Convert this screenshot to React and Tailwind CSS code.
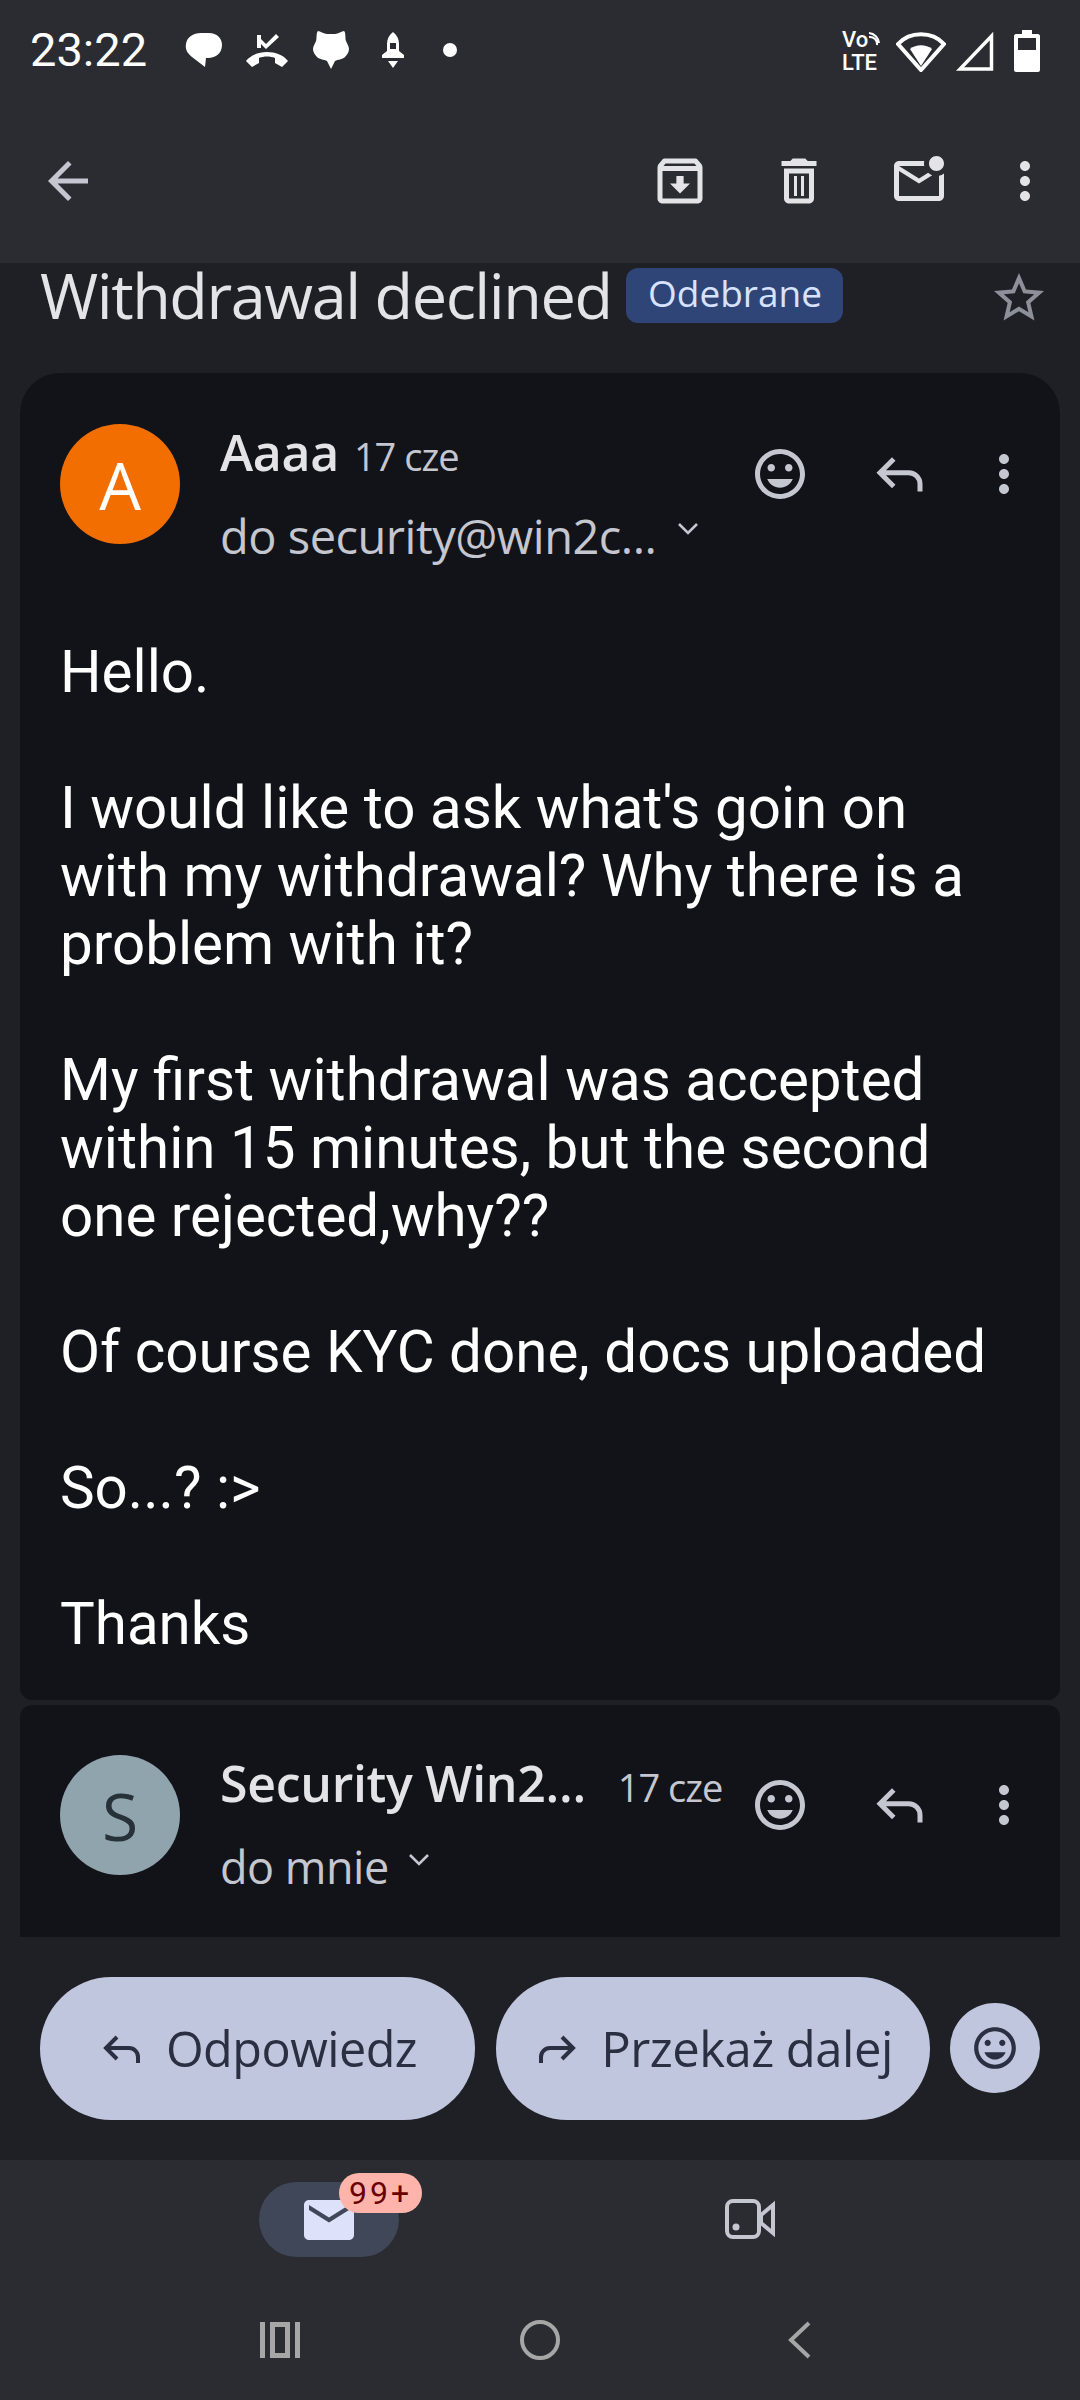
import React from "react";

const headingFont = "font-['Open_Sans','Noto_Sans',sans-serif]";
const bodyFont = "font-['Roboto','Liberation_Sans',sans-serif]";

const Icon = ({ d, size = 60, className = "" }) => (
  <svg viewBox="0 0 24 24" width={size} height={size} fill="currentColor" className={`shrink-0 ${className}`}>
    <path d={d} />
  </svg>
);

const paths = {
  back: "M20 11H7.83l5.59-5.59L12 4l-8 8 8 8 1.41-1.41L7.83 13H20v-2z",
  archive:
    "M20.54 5.23l-1.39-1.68C18.88 3.21 18.47 3 18 3H6c-.47 0-.88.21-1.16.55L3.46 5.23C3.17 5.57 3 6.02 3 6.5V19c0 1.1.9 2 2 2h14c1.1 0 2-.9 2-2V6.5c0-.48-.17-.93-.46-1.27zM6.24 5h11.52l.83 1H5.42l.82-1zM5 19V8h14v11H5zm8.45-9h-2.9v3H8l4 4 4-4h-2.55z",
  trash:
    "M16 9v10H8V9h8m-1.5-6h-5l-1 1H5v2h14V4h-3.5l-1-1zM18 7H6v12c0 1.1.9 2 2 2h8c1.1 0 2-.9 2-2V7zM10 10h1.2v8H10zM12.8 10H14v8h-1.2z",
  unread:
    "M22 8.98V18c0 1.1-.9 2-2 2H4c-1.1 0-2-.9-2-2V6c0-1.1.9-2 2-2h10.1c-.06.32-.1.66-.1 1s.04.68.1 1H4l8 5 3.67-2.29c.47.43 1.02.76 1.63.98L12 13 4 8v10h16V9.9c.74-.15 1.42-.48 2-.92zM16 5c0 1.66 1.34 3 3 3s3-1.34 3-3-1.34-3-3-3-3 1.34-3 3z",
  more: "M12 8c1.1 0 2-.9 2-2s-.9-2-2-2-2 .9-2 2 .9 2 2 2zm0 2c-1.1 0-2 .9-2 2s.9 2 2 2 2-.9 2-2-.9-2-2-2zm0 6c-1.1 0-2 .9-2 2s.9 2 2 2 2-.9 2-2-.9-2-2-2z",
  star: "M22 9.24l-7.19-.62L12 2 9.19 8.63 2 9.24l5.46 4.73L5.82 21 12 17.27 18.18 21l-1.63-7.03L22 9.24zM12 15.4l-3.76 2.27 1-4.28-3.32-2.88 4.38-.38L12 6.1l1.71 4.04 4.38.38-3.32 2.88 1 4.28L12 15.4z",
  smile:
    "M11.99 2C6.47 2 2 6.48 2 12s4.47 10 9.99 10C17.52 22 22 17.52 22 12S17.52 2 11.99 2zM12 20c-4.42 0-8-3.58-8-8s3.58-8 8-8 8 3.58 8 8-3.58 8-8 8zm3.5-9c.83 0 1.5-.67 1.5-1.5S16.33 8 15.5 8 14 8.67 14 9.5s.67 1.5 1.5 1.5zm-7 0c.83 0 1.5-.67 1.5-1.5S9.33 8 8.5 8 7 8.67 7 9.5 7.67 11 8.5 11zm3.5 6.5c2.33 0 4.31-1.46 5.11-3.5H6.89c.8 2.04 2.78 3.5 5.11 3.5z",
  mail: "M20 4H4c-1.1 0-2 .9-2 2v12c0 1.1.9 2 2 2h16c1.1 0 2-.9 2-2V6c0-1.1-.9-2-2-2zm0 4l-8 5-8-5V6l8 5 8-5v2z",
};

const ReplyIcon = ({ size = 60, flip = false }) => (
  <svg viewBox="0 0 24 24" width={size} height={size} fill="none" stroke="currentColor" strokeWidth="2" className={`shrink-0 ${flip ? "-scale-x-100" : ""}`}>
    <path d="M9.5 6 L4 11.5 L9.5 17 M4 11.5 H15.5 a4.5 4.5 0 0 1 4.5 4.5 V19" />
  </svg>
);

const Chevron = () => (
  <svg viewBox="0 0 20 12" width="20" height="12" fill="none" stroke="#c4c6d0" strokeWidth="2.6">
    <path d="M1 1 L10 10 L19 1" />
  </svg>
);

const StatusLeft = () => (
  <div className="flex items-center ml-[38px] gap-[22px] text-white">
    <svg viewBox="0 0 38 36" width="38" height="36" fill="white">
      <path d="M16 1h8c8 0 13 5 13 12 0 8-6 13-14 13h-2l-1 9L7 25C2 21 0 17 1 12 2 5 8 1 16 1z" />
    </svg>
    <svg viewBox="0 0 44 36" width="44" height="36" fill="white" className="mr-[2px]">
      <path d="M12 3h4v4l5 5L31 2l3 3-13 12-5-5v4h-4zM1 29c9-12 33-12 42 0l-6 6-7-4v-5c-5-2-11-2-16 0v5l-7 4z" />
    </svg>
    <svg viewBox="0 0 36 40" width="36" height="40" fill="white">
      <path d="M5 1c2 0 6 3 9 3h8c3 0 7-3 9-3 2 1 1 8 2 10 1 3 3 5 3 8 0 3-2 6-4 8-3 3-7 2-10 4l-4 8-4-8c-3-2-7-1-10-4-2-2-4-5-4-8 0-3 2-5 3-8 1-2 0-9 2-10z" />
    </svg>
    <svg viewBox="0 0 24 36" width="24" height="36" fill="white" className="ml-[10px]">
      <path fillRule="evenodd" d="M12 0c4 3 6 7 6 12v7l5 4v3H1v-3l5-4v-7c0-5 2-9 6-12zM9 11v6h6v-6z M7 29h10l-5 7z" />
    </svg>
    <div className="w-[14px] h-[14px] rounded-full bg-white ml-[16px]" />
  </div>
);

const StatusRight = () => (
  <div className="flex items-center text-white mt-[2px]">
    <div className={`flex flex-col w-[40px] ${bodyFont} text-[22px] leading-[23px] font-medium`}>
      <div className="flex items-center">
        <span>Vo</span>
        <svg viewBox="0 0 12 14" width="12" height="14" fill="none" stroke="white" strokeWidth="2">
          <path d="M1 5 A7 7 0 0 1 9 13 M1 1 A11 11 0 0 1 11 11" />
        </svg>
      </div>
      <span>LTE</span>
    </div>
    <svg viewBox="0 0 50 42" width="50" height="42" fill="none" stroke="white" strokeWidth="4" className="ml-[14px]">
      <path d="M2 14 C14 1 36 1 48 14 L25 40 Z" />
      <path d="M14 19 C20 14 30 14 36 19 L25 36 Z" fill="white" stroke="none" />
    </svg>
    <svg viewBox="0 0 38 40" width="38" height="40" fill="none" stroke="white" strokeWidth="3.5" className="ml-[10px]">
      <path d="M35.5 5 V38 H4 Z" strokeLinejoin="miter" />
    </svg>
    <svg viewBox="0 0 26 42" width="26" height="42" className="ml-[20px]">
      <path d="M8 0h10v4h6c1 0 2 1 2 2v34c0 1-1 2-2 2H2c-1 0-2-1-2-2V6c0-1 1-2 2-2h6z" fill="white" />
      <rect x="4" y="8" width="18" height="12" fill="#2a2c31" />
    </svg>
  </div>
);

const Avatar = ({ letter, className }) => (
  <div className={`w-[120px] h-[120px] rounded-full flex items-center justify-center shrink-0 text-[66px] ${headingFont} ${className}`}>
    {letter}
  </div>
);

const MessageHead = ({ letter, avatarClass, name, dateClass, to, toClass, chevronClass }) => (
  <div className="flex items-start pl-[40px] pr-[20px]">
    <Avatar letter={letter} className={avatarClass} />
    <div className="ml-[40px] flex-1 min-w-0">
      <div className={`flex items-baseline h-[54px] mt-[1px] ${headingFont}`}>
        <span className="text-[50px] leading-[54px] font-semibold text-[#e3e3e8] tracking-[-0.3px]">{name}</span>
        <span className={`text-[38px] text-[#c4c6d0] tracking-[-1px] ${dateClass}`}>17 cze</span>
      </div>
      <div className={`flex items-start mt-[30px] leading-[54px] text-[#c4c6d0] ${headingFont} tracking-[-0.5px] ${toClass}`}>
        <span>{to}</span>
        <span className={`mt-[14px] ${chevronClass}`}><Chevron /></span>
      </div>
    </div>
    <div className="flex items-center text-[#c4c6d0] absolute right-[26px] mt-[20px]">
      <Icon d={paths.smile} />
      <span className="ml-[60px]"><ReplyIcon /></span>
      <Icon d={paths.more} className="ml-[44px]" />
    </div>
  </div>
);

export default function App() {
  return (
    <div className="w-[1080px] h-[2400px] bg-[#1e2025] flex flex-col overflow-hidden">
      {/* status bar + toolbar */}
      <div className="h-[263px] bg-[#2a2c31] shrink-0 flex flex-col">
        <div className="h-[100px] flex items-center justify-between pr-[40px] pl-[30px]">
          <div className="flex items-center">
            <span className={`text-[47px] text-white ${bodyFont}`}>23:22</span>
            <StatusLeft />
          </div>
          <StatusRight />
        </div>
        <div className="flex items-center h-[164px] pl-[38px] pr-[25px] text-[#e3e3e8]">
          <Icon d={paths.back} className="text-[#c4c6d0]" />
          <div className="flex-1" />
          <Icon d={paths.archive} />
          <Icon d={paths.trash} className="ml-[59px]" />
          <Icon d={paths.unread} className="ml-[60px]" />
          <Icon d={paths.more} className="ml-[46px]" />
        </div>
      </div>

      {/* subject */}
      <div className="h-[110px] shrink-0 flex items-start pl-[40px] pr-[31px]">
        <h1 className={`text-[63px] leading-[72px] text-[#e3e3e8] tracking-[-1.45px] ${headingFont} font-normal mt-[-4px]`}>
          Withdrawal declined
        </h1>
        <span className={`ml-[15px] mt-[5px] h-[55px] w-[217px] rounded-[12px] bg-[#2f4578] text-[#d7e2ff] text-[37px] leading-[50px] text-center ${headingFont}`}>
          Odebrane
        </span>
        <div className="flex-1" />
        <Icon d={paths.star} className="text-[#8e9099] mt-[5px]" />
      </div>

      {/* first message */}
      <div className="relative mx-[20px] h-[1327px] shrink-0 bg-[#121318] rounded-t-[40px] rounded-b-[12px] pt-[51px]">
        <MessageHead letter="A" avatarClass="bg-[#f26e00] text-white" name="Aaaa" dateClass="ml-[15px]" to="do security@win2c..." toClass="text-[47px]" chevronClass="ml-[22px]" />
        <div className={`mt-[75px] pl-[40px] text-[58.3px] leading-[68px] text-white ${bodyFont}`}>
          <p>Hello.</p>
          <p className="mt-[68px]">I would like to ask what's goin on<br />with my withdrawal? Why there is a<br />problem with it?</p>
          <p className="mt-[68px]">My first withdrawal was accepted<br />within 15 minutes, but the second<br />one rejected,why??</p>
          <p className="mt-[68px]">Of course KYC done, docs uploaded</p>
          <p className="mt-[68px]">So...? :&gt;</p>
          <p className="mt-[68px]">Thanks</p>
        </div>
      </div>

      {/* second message */}
      <div className="relative mx-[20px] mt-[5px] h-[232px] shrink-0 bg-[#121318] rounded-t-[12px] pt-[50px]">
        <MessageHead letter="S" avatarClass="bg-[#90a4ae] text-[#263238]" name="Security Win2..." dateClass="ml-[32px]" to="do mnie" toClass="text-[45px]" chevronClass="ml-[20px]" />
      </div>

      {/* reply buttons */}
      <div className="h-[223px] shrink-0 flex items-start pl-[40px] pt-[40px]">
        <button className={`w-[435px] h-[143px] rounded-[72px] bg-[#c0c6dd] text-[#2a3042] flex items-center justify-center text-[48.5px] font-medium ${headingFont}`}>
          <ReplyIcon size={48} />
          <span className="ml-[20px] tracking-[-0.5px]">Odpowiedz</span>
        </button>
        <button className={`w-[434px] h-[143px] ml-[21px] rounded-[72px] bg-[#c0c6dd] text-[#2a3042] flex items-center justify-center text-[49px] font-medium ${headingFont}`}>
          <ReplyIcon size={48} flip />
          <span className="ml-[20px] tracking-[-0.5px]">Przekaż dalej</span>
        </button>
        <button className="w-[90px] h-[90px] ml-[20px] mt-[26px] rounded-full bg-[#c0c6dd] text-[#2a3042] flex items-center justify-center">
          <Icon d={paths.smile} size={50} />
        </button>
      </div>

      {/* bottom navigation */}
      <div className="flex-1 bg-[#2a2c31] flex flex-col">
        <div className="flex h-[150px] pt-[22px]">
          <div className="relative ml-[259px] w-[140px] h-[75px] rounded-full bg-[#3f4759] text-[#dde1f9] flex items-center justify-center">
            <Icon d={paths.mail} />
            <span className={`absolute left-[80px] top-[-9px] w-[83px] h-[40px] rounded-full bg-[#ffb4ab] text-[#690005] text-[32px] leading-[40px] tracking-[3px] text-center ${bodyFont}`}>
              99+
            </span>
          </div>
          <div className="ml-[326px] mt-[17px] text-[#c4c6d0]">
            <svg viewBox="0 0 50 40" width="50" height="40" fill="none" stroke="currentColor" strokeWidth="4">
              <rect x="2" y="2" width="32" height="36" rx="6" />
              <path d="M36 16 L48 6 V34 L36 24 Z" />
              <circle cx="11" cy="28" r="3.5" fill="currentColor" stroke="none" />
            </svg>
          </div>
        </div>
        <div className="flex items-center h-[60px]">
          <svg viewBox="0 0 40 36" width="40" height="36" className="ml-[260px] text-[#a6a6a6]" fill="currentColor">
            <path d="M0 0h5v36H0zM35 0h5v36h-5zM10 0h20v36H10zM15 5v26h10V5z" fillRule="evenodd" />
          </svg>
          <div className="ml-[220px] w-[40px] h-[40px] rounded-full border-[4px] border-[#a6a6a6]" />
          <svg viewBox="0 0 24 38" width="24" height="38" fill="none" stroke="#a6a6a6" strokeWidth="4" className="ml-[227px]">
            <path d="M22 2 L4 19 L22 36" />
          </svg>
        </div>
      </div>
    </div>
  );
}
